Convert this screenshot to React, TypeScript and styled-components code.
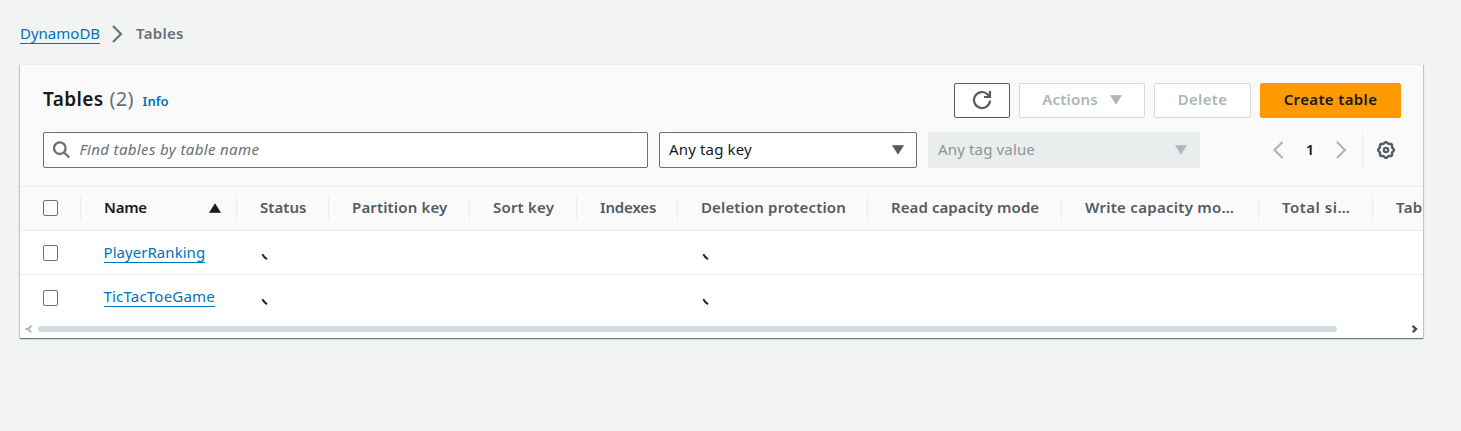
import React from "react";
import styled, { createGlobalStyle } from "styled-components";

const Global = createGlobalStyle`
  *{box-sizing:border-box}
  body{margin:0;background:#f2f3f3;font-family:"Noto Sans","Open Sans",sans-serif;font-size:15px;color:#16191f;overflow:hidden}
`;
const Page = styled.main`
  width: 1461px;
  height: 431px;
  padding: 20px 38px 0 20px;
`;
const Text = styled.span<{ $ls?: number; $lift?: number }>`
  display: inline-block;
  white-space: pre;
  letter-spacing: ${p => p.$ls ?? 0}px;
  padding-bottom: ${p => p.$lift ?? 0}px;
`;
const Crumbs = styled.nav`
  display: flex;
  align-items: center;
  height: 28px;
  line-height: 20px;
  color: #687078;
  svg { margin: 0 13px 0 12px; }
  b { font-weight: 600; }
`;
const Link = styled.a`
  display: inline-block;
  color: #0073bb;
  border-bottom: 1px solid #0073bb;
  line-height: 19px;
  height: 20px;
`;
const Card = styled.section`
  margin-top: 16px;
  width: 1403px;
  height: 274px;
  background: #fff;
  overflow: hidden;
  box-shadow: 0 1px 1px 0 rgba(0,28,36,.4), 1px 1px 1px 0 rgba(0,28,36,.15), -1px 1px 1px 0 rgba(0,28,36,.15);
`;
const Head = styled.header`
  height: 123px;
  background: #fafafa;
  border-top: 1px solid #eaeded;
  border-bottom: 1px solid #eaeded;
  padding: 18px 22px 0 23px;
`;
const TitleRow = styled.div`
  display: flex;
  height: 35px;
  align-items: center;
`;
const Title = styled.h2`
  margin: 0;
  padding-bottom: 1px;
  font-size: 19px;
  line-height: 24px;
  font-weight: 600;
  display: flex;
  align-items: baseline;
  flex: 1;
  i { font-style: normal; font-weight: 400; color: #687078; margin-left: 6px; font-size: 20px; }
  a { font-size: 13px; font-weight: 600; color: #0073bb; margin-left: 9px; }
`;
const Button = styled.button<{ $w: number; $kind?: "disabled" | "primary" }>`
  width: ${p => p.$w}px;
  height: 35px;
  margin-left: 9px;
  padding: 0;
  border-radius: 2px;
  display: flex;
  align-items: center;
  justify-content: center;
  font: 600 15px/20px "Noto Sans", sans-serif;
  border: 1px solid ${p => (p.$kind === "primary" ? "#ff9900" : p.$kind ? "#d5dbdb" : "#545b64")};
  background: ${p => (p.$kind === "primary" ? "#ff9900" : "#fff")};
  color: ${p => (p.$kind === "primary" ? "#16191f" : p.$kind ? "#aab7b8" : "#545b64")};
  svg { margin: ${p => (p.$kind ? "0 0 1px 12px" : "0 0 1px")}; }
`;
const FilterRow = styled.div`
  display: flex;
  height: 36px;
  margin-top: 14px;
  align-items: center;
`;
const Search = styled.div`
  display: flex;
  align-items: center;
  width: 605px;
  height: 36px;
  border: 1px solid #687078;
  border-radius: 2px;
  background: #fff;
  color: #687078;
  font-style: italic;
  padding-left: 9px;
  svg { margin-right: 8.5px; }
`;
const Select = styled.div<{ $w: number; $off?: boolean }>`
  display: flex;
  align-items: center;
  justify-content: space-between;
  width: ${p => p.$w}px;
  height: 36px;
  margin-left: 11px;
  padding: 0 12px 0 9px;
  border-radius: 2px;
  border: 1px solid ${p => (p.$off ? "#eaeded" : "#687078")};
  background: ${p => (p.$off ? "#eaeded" : "#fff")};
  color: ${p => (p.$off ? "#879596" : "#16191f")};
  svg { color: ${p => (p.$off ? "#aab7b8" : "#545b64")}; }
`;
const Pager = styled.div`
  display: flex;
  align-items: center;
  margin-left: auto;
  color: #aab7b8;
  b { font-weight: 600; color: #16191f; width: 46px; text-align: center; margin: 0 3px; font-size: 15px; padding-bottom: 2px; }
`;
const Prefs = styled.div`
  display: flex;
  align-items: center;
  height: 36px;
  border-left: 1px solid #eaeded;
  margin-left: 15px;
  padding: 0 6px 0 14px;
`;
const Row = styled.div<{ $h: number; $head?: boolean; $last?: boolean }>`
  display: grid;
  grid-template-columns: 61px 156px 92px 141px 107px 101px 190px 194px 197px 114px 50px;
  width: 1403px;
  height: ${p => p.$h}px;
  padding-top: ${p => (p.$head || p.$last ? 0 : 1)}px;
  background: ${p => (p.$head ? "#fafafa" : "#fff")};
  border-bottom: ${p => (p.$last ? 0 : 1)}px solid #eaeded;
  font-weight: ${p => (p.$head ? 600 : 400)};
  a { margin: 0 0 ${p => (p.$last ? 2 : 0)}px -0.5px; }
`;
const HCell = styled.div<{ $active?: boolean }>`
  display: flex;
  align-items: center;
  justify-content: space-between;
  height: 23px;
  margin-top: 10px;
  border-right: 1px solid #eaeded;
  padding: 0 15px 1px 23px;
  white-space: nowrap;
  color: ${p => (p.$active ? "#16191f" : "#545b64")};
  &:last-child { border: 0; padding-right: 0; }
`;
const Cell = styled.div`
  display: flex;
  align-items: center;
  padding-left: 23px;
`;
const Spin = styled(Cell)`
  padding: 8px 0 0 24px;
`;
const Check = styled.span`
  width: 15px;
  height: 16px;
  border: 1px solid #687078;
  border-radius: 2px;
  background: #fff;
  flex: none;
`;
const ScrollBar = styled.div`
  display: flex;
  align-items: center;
  height: 16px;
  padding: 0 5px;
`;
const Track = styled.div`
  flex: 1;
  padding-left: 5px;
`;
const Thumb = styled.div`
  width: 1299px;
  height: 6px;
  border-radius: 3px;
  background: #d1dbe3;
`;

const Tri = ({ up }: { up?: boolean }) => (
  <svg width="12" height="10" viewBox="0 0 12 10">
    <path d={up ? "M6 .8L11.5 9.5H.5Z" : "M.5.5h11L6 9.2Z"} fill="currentColor" stroke="currentColor" strokeWidth=".6" strokeLinejoin="round" />
  </svg>
);
const Chevron = ({ left }: { left?: boolean }) => (
  <svg width="11" height="18" viewBox="0 0 11 18" fill="none" stroke="currentColor" strokeWidth="2.2">
    <path d={left ? "M9.5 1L1.5 9l8 8" : "M1 1l8 8-8 8"} />
  </svg>
);
const Refresh = () => (
  <svg width="20" height="20" viewBox="0 0 20 20" fill="none" stroke="currentColor" strokeWidth="2.2">
    <path d="M18 10.5A8 8 0 1 1 15.6 4.3L17.5 6.2" />
    <path d="M18 1v6h-6" />
    <path d="M17.5 3.5v3h-3z" fill="currentColor" stroke="none" />
  </svg>
);
const gear = Array.from({ length: 65 }, (_, i) => {
  const a = (i / 64) * Math.PI * 2;
  const r = 7.3 + 0.7 * Math.cos(a * 8);
  return `${i ? "L" : "M"}${(9 + r * Math.cos(a)).toFixed(2)} ${(9 + r * Math.sin(a)).toFixed(2)}`;
}).join("") + "Z";
const Gear = () => (
  <svg width="18" height="18" viewBox="0 0 18 18" fill="none" stroke="#545b64" strokeWidth="2.4">
    <path d={gear} />
    <circle cx="9" cy="9" r="2.2" strokeWidth="2.2" />
  </svg>
);
const Tick = () => (
  <svg width="8" height="8" viewBox="0 0 8 8">
    <path d="M1.3 1.3Q2.8 4 6 6.2" stroke="#222" strokeWidth="2" fill="none" />
  </svg>
);
const ScrollArrow = ({ right }: { right?: boolean }) => (
  <svg width="8" height="8" viewBox="0 0 8 8" fill="none" stroke={right ? "#505050" : "#b5b5b5"} strokeWidth={right ? 2.4 : 2}>
    <path d={right ? "M2.5 .8L6 4 2.7 7.2" : "M6.5 .8L3 4l3 3.2M.5 4h3"} />
  </svg>
);

const columns: [string, number][] = [
  ["Status", 0.05], ["Partition key", 0.15], ["Sort key", 0.2], ["Indexes", -0.15], ["Deletion protection", 0.14],
  ["Read capacity mode", 0.08], ["Write capacity mo…", 0.28], ["Total si…", 0.5], ["Tab", 0.3],
];
const rows: [string, number][] = [["PlayerRanking", 0.05], ["TicTacToeGame", 0.2]];

export default function App() {
  return (
    <Page>
      <Global />
      <Crumbs>
        <Link><Text>DynamoDB</Text></Link>
        <Chevron />
        <b><Text $ls={0.3} $lift={3}>Tables</Text></b>
      </Crumbs>
      <Card>
        <Head>
          <TitleRow>
            <Title><Text $ls={0.4}>Tables</Text><i><Text $ls={0.2}>(2)</Text></i><a><Text>Info</Text></a></Title>
            <Button $w={56}><Refresh /></Button>
            <Button $w={126} $kind="disabled"><Text $ls={0.22} $lift={3}>Actions</Text><Tri /></Button>
            <Button $w={97} $kind="disabled"><Text $ls={0.3} $lift={3}>Delete</Text></Button>
            <Button $w={141} $kind="primary"><Text $ls={0.35} $lift={3}>Create table</Text></Button>
          </TitleRow>
          <FilterRow>
            <Search>
              <svg width="18" height="18" viewBox="0 0 18 18" fill="none" stroke="currentColor" strokeWidth="2.3"><circle cx="6.8" cy="7.2" r="5.8" /><path d="M11.1 11.5l5.2 5" /></svg>
              <Text $ls={0.36} $lift={2}>Find tables by table name</Text>
            </Search>
            <Select $w={258}><Text $ls={0.15} $lift={2}>Any tag key</Text><Tri /></Select>
            <Select $w={272} $off><Text $ls={0.15} $lift={2}>Any tag value</Text><Tri /></Select>
            <Pager>
              <Chevron left /><b>1</b><Chevron />
              <Prefs><Gear /></Prefs>
            </Pager>
          </FilterRow>
        </Head>
        <Row $h={44} $head>
          <HCell><Check /></HCell>
          <HCell $active><Text $ls={-0.25} $lift={2}>Name</Text><Tri up /></HCell>
          {columns.map(([c, s]) => <HCell key={c}><Text $ls={s} $lift={2}>{c}</Text></HCell>)}
        </Row>
        {rows.map(([n, s], i) => (
          <Row key={n} $h={i ? 46 : 44} $last={i === 1}>
            <Cell><Check /></Cell>
            <Cell><Link><Text $ls={s}>{n}</Text></Link></Cell>
            <Spin><Tick /></Spin>
            <Cell /><Cell /><Cell />
            <Spin><Tick /></Spin>
          </Row>
        ))}
        <ScrollBar><ScrollArrow /><Track><Thumb /></Track><ScrollArrow right /></ScrollBar>
      </Card>
    </Page>
  );
}
